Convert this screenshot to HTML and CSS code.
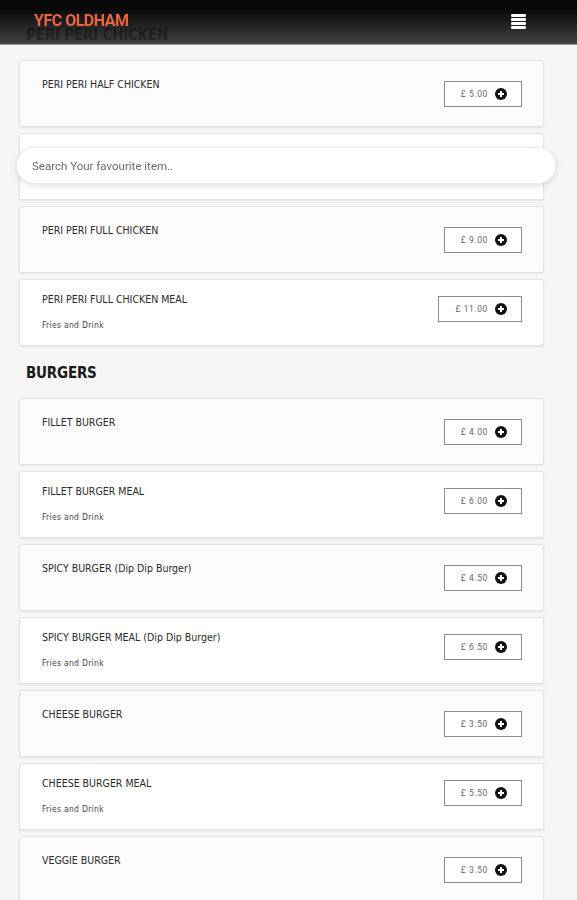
FILE: index.html
```html
<!DOCTYPE html>
<html lang="en">
<head>
<meta charset="UTF-8">
<meta name="viewport" content="width=device-width, initial-scale=1.0">
<title>YFC OLDHAM</title>
<link rel="stylesheet" href="styles.css">
</head>
<body>

<!-- top bar -->
<div class="topbar">
    <span class="logo">YFC OLDHAM</span>
    <svg class="menu-icon" width="15" height="15" viewBox="0 0 15 15">
        <rect x="0" y="0" width="15" height="3" rx="1.2" fill="#fff"/>
        <rect x="0" y="4" width="15" height="3" rx="1" fill="#fff"/>
        <rect x="0" y="8" width="15" height="3" rx="1" fill="#fff"/>
        <rect x="0" y="12" width="15" height="3" rx="1.2" fill="#fff"/>
    </svg>
</div>

<!-- search -->
<div class="search">
    <input type="text" placeholder="Search Your favourite item..">
</div>

<div class="content">
    <h2 class="cat-title">PERI PERI CHICKEN</h2>

    <div class="item tint">
        <div class="item-info"><div class="item-name">PERI PERI HALF CHICKEN</div></div>
        <div class="price">£ 5.00 <svg class="plus" viewBox="0 0 12 12"><circle cx="6" cy="6" r="6" fill="#111"/><path d="M6 3v6M3 6h6" stroke="#fff" stroke-width="2"/></svg></div>
    </div>
    <div class="item has-desc">
        <div class="item-info"><div class="item-name">PERI PERI HALF CHICKEN MEAL</div><div class="item-desc">Fries and Drink</div></div>
        <div class="price">£ 7.00 <svg class="plus" viewBox="0 0 12 12"><circle cx="6" cy="6" r="6" fill="#111"/><path d="M6 3v6M3 6h6" stroke="#fff" stroke-width="2"/></svg></div>
    </div>
    <div class="item tint">
        <div class="item-info"><div class="item-name">PERI PERI FULL CHICKEN</div></div>
        <div class="price">£ 9.00 <svg class="plus" viewBox="0 0 12 12"><circle cx="6" cy="6" r="6" fill="#111"/><path d="M6 3v6M3 6h6" stroke="#fff" stroke-width="2"/></svg></div>
    </div>
    <div class="item has-desc">
        <div class="item-info"><div class="item-name">PERI PERI FULL CHICKEN MEAL</div><div class="item-desc">Fries and Drink</div></div>
        <div class="price">£ 11.00 <svg class="plus" viewBox="0 0 12 12"><circle cx="6" cy="6" r="6" fill="#111"/><path d="M6 3v6M3 6h6" stroke="#fff" stroke-width="2"/></svg></div>
    </div>

    <h2 class="cat-title">BURGERS</h2>

    <div class="item tint">
        <div class="item-info"><div class="item-name">FILLET BURGER</div></div>
        <div class="price">£ 4.00 <svg class="plus" viewBox="0 0 12 12"><circle cx="6" cy="6" r="6" fill="#111"/><path d="M6 3v6M3 6h6" stroke="#fff" stroke-width="2"/></svg></div>
    </div>
    <div class="item has-desc">
        <div class="item-info"><div class="item-name">FILLET BURGER MEAL</div><div class="item-desc">Fries and Drink</div></div>
        <div class="price">£ 6.00 <svg class="plus" viewBox="0 0 12 12"><circle cx="6" cy="6" r="6" fill="#111"/><path d="M6 3v6M3 6h6" stroke="#fff" stroke-width="2"/></svg></div>
    </div>
    <div class="item tint">
        <div class="item-info"><div class="item-name">SPICY BURGER (Dip Dip Burger)</div></div>
        <div class="price">£ 4.50 <svg class="plus" viewBox="0 0 12 12"><circle cx="6" cy="6" r="6" fill="#111"/><path d="M6 3v6M3 6h6" stroke="#fff" stroke-width="2"/></svg></div>
    </div>
    <div class="item has-desc">
        <div class="item-info"><div class="item-name">SPICY BURGER MEAL (Dip Dip Burger)</div><div class="item-desc">Fries and Drink</div></div>
        <div class="price">£ 6.50 <svg class="plus" viewBox="0 0 12 12"><circle cx="6" cy="6" r="6" fill="#111"/><path d="M6 3v6M3 6h6" stroke="#fff" stroke-width="2"/></svg></div>
    </div>
    <div class="item tint">
        <div class="item-info"><div class="item-name">CHEESE BURGER</div></div>
        <div class="price">£ 3.50 <svg class="plus" viewBox="0 0 12 12"><circle cx="6" cy="6" r="6" fill="#111"/><path d="M6 3v6M3 6h6" stroke="#fff" stroke-width="2"/></svg></div>
    </div>
    <div class="item has-desc">
        <div class="item-info"><div class="item-name">CHEESE BURGER MEAL</div><div class="item-desc">Fries and Drink</div></div>
        <div class="price">£ 5.50 <svg class="plus" viewBox="0 0 12 12"><circle cx="6" cy="6" r="6" fill="#111"/><path d="M6 3v6M3 6h6" stroke="#fff" stroke-width="2"/></svg></div>
    </div>
    <div class="item tint">
        <div class="item-info"><div class="item-name">VEGGIE BURGER</div></div>
        <div class="price">£ 3.50 <svg class="plus" viewBox="0 0 12 12"><circle cx="6" cy="6" r="6" fill="#111"/><path d="M6 3v6M3 6h6" stroke="#fff" stroke-width="2"/></svg></div>
    </div>
</div>

</body>
</html>
```

FILE: styles.css
```css
body {
    font-family: Roboto, "Liberation Sans", sans-serif;
    margin: 0;
    padding: 0;
    background-color: #f6f6f6;
    color: #222;
}
/* top bar */
.topbar {
    position: fixed;
    top: 0;
    left: 0;
    right: 0;
    height: 44px;
    background: linear-gradient(rgba(0, 0, 0, 0.97) 20%, rgba(45, 45, 45, 0.9));
    border-bottom: 1px solid #9a9a9a;
    display: flex;
    align-items: flex-start;
    justify-content: space-between;
    padding: 0 51px 0 34px;
    z-index: 10;
}
.logo {
    margin-top: 11px;
    font-size: 16px;
    font-weight: bold;
    letter-spacing: -0.5px;
    color: #e8633f;
}
.menu-icon {
    margin-top: 14px;
}
/* search */
.search {
    position: fixed;
    top: 147px;
    left: 16px;
    right: 21px;
    z-index: 5;
}
.search input {
    width: 100%;
    box-sizing: border-box;
    height: 37px;
    border: 1px solid #ececec;
    border-radius: 19px;
    background-color: #fff;
    box-shadow: 0 2px 6px rgba(0, 0, 0, 0.12);
    padding: 0 15px;
    font-family: Roboto, sans-serif;
    font-size: 11.5px;
    outline: none;
}
.search input::placeholder {
    color: #6a6a6a;
}
/* list */
.content {
    padding: 8px 33px 0 19px;
}
.cat-title {
    font-family: "DejaVu Sans Condensed", sans-serif;
    font-size: 15px;
    line-height: 20px;
    font-weight: bold;
    letter-spacing: -0.2px;
    margin: 17px 0 15px 7px;
    color: #1a1a1a;
}
.item {
    height: 67px;
    box-sizing: border-box;
    margin-bottom: 6px;
    background-color: #fff;
    border: 1px solid #e4e4e4;
    border-radius: 2px;
    box-shadow: 0 1px 2px rgba(0, 0, 0, 0.08);
    display: flex;
    justify-content: space-between;
    align-items: flex-start;
    padding: 17px 21px 0 22px;
}
.item.has-desc {
    padding-top: 13px;
}
.item.tint {
    background-color: #fefbfe;
}
.item-name {
    font-family: "DejaVu Sans Condensed", sans-serif;
    font-size: 10.5px;
    line-height: 12px;
    color: #2a2a2a;
}
.item-desc {
    margin-top: 15px;
    font-family: "DejaVu Sans Condensed", sans-serif;
    font-size: 8.5px;
    color: #444;
    letter-spacing: 0.3px;
}
.price {
    margin-top: 3px;
    height: 26px;
    box-sizing: border-box;
    border: 1px solid #8c8c8c;
    display: flex;
    align-items: center;
    gap: 7px;
    padding: 0 14px 0 16px;
    font-size: 8.5px;
    letter-spacing: 0.6px;
    color: #666;
    background-color: #fff;
}
.plus {
    width: 12px;
    height: 12px;
}
```
